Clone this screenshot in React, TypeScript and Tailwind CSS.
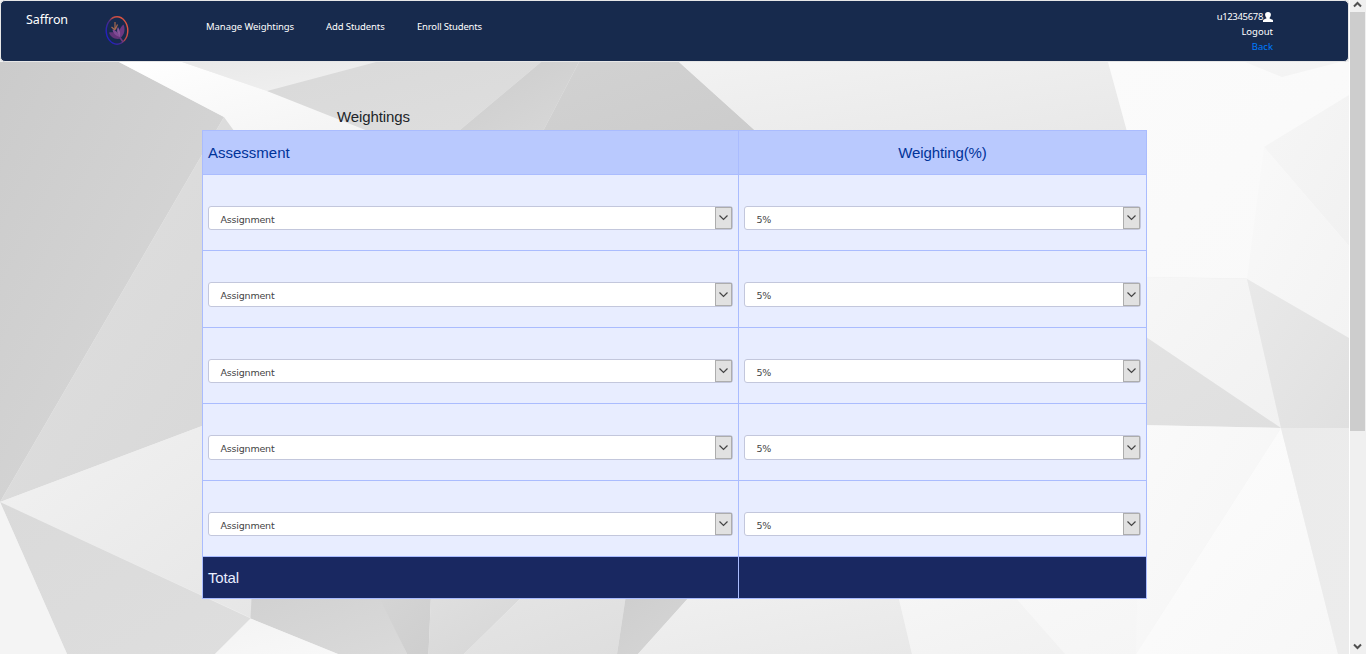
import React from "react";

type Facet = { points: string; from: string; to: string };

const facets: Facet[] = [
  { points: "0,62 119,62 224,117 0,502", from: "#cbcbcb", to: "#dadada" },
  { points: "224,117 0,502 202,426 260,400 260,130", from: "#e0e0e0", to: "#d7d7d7" },
  { points: "0,502 202,426 300,390 300,599 251,618", from: "#f3f3f3", to: "#e5e5e5" },
  { points: "0,502 251,618.5 215,654 67,654", from: "#dadada", to: "#dedede" },
  { points: "0,502 67,654 0,654", from: "#f4f4f4", to: "#f4f4f4" },
  { points: "119,62 182,62 267,91 385,135 237,135 224,117", from: "#ffffff", to: "#f3f3f3" },
  { points: "182,62 376,62 267,91", from: "#e9e9e9", to: "#f0f0f0" },
  { points: "376,62 541,62 454,135 378,135 267,91", from: "#d9d9d9", to: "#dedede" },
  { points: "541,62 579,62 541,135 454,135", from: "#cccccc", to: "#d8d8d8" },
  { points: "579,62 679,62 760,135 541,135", from: "#d2d2d2", to: "#cccccc" },
  { points: "679,62 1108,62 1128,135 760,135", from: "#f2f2f2", to: "#e8e8e8" },
  { points: "251.7,595 380,595 407,654 338,654 250.5,618.5", from: "#d1d1d1", to: "#dadada" },
  { points: "378,595 431,595 428.5,654 407,654", from: "#d5d5d5", to: "#cecece" },
  { points: "431,595 524,595 464,654 428.5,654", from: "#dfdfdf", to: "#d6d6d6" },
  { points: "524,595 626,595 617,654 464,654", from: "#e5e5e5", to: "#dedede" },
  { points: "626,595 691,595 638,654 617,654", from: "#cecece", to: "#d6d6d6" },
  { points: "691,595 898,595 912,654 638,654", from: "#f0f0f0", to: "#e8e8e8" },
  { points: "250.5,618.5 338,654 215,654", from: "#f3f3f3", to: "#f8f8f8" },
  { points: "898,595 1013,595 1065,654 912,654", from: "#f6f6f6", to: "#f1f1f1" },
  { points: "1013,595 1150,595 1150,632 1136,654 1065,654", from: "#f8f8f8", to: "#f5f5f5" },
  { points: "1108,62 1349,62 1349,280 1147,277 1128,135", from: "#fbfbfb", to: "#f9f9f9" },
  { points: "1245,62 1340,62 1282,77", from: "#f5f5f5", to: "#f3f3f3" },
  { points: "1264,147 1349,95 1349,246", from: "#f6f6f6", to: "#f1f1f1" },
  { points: "1264,147 1349,246 1349,338 1247,279", from: "#f9f9f9", to: "#f3f3f3" },
  { points: "1140,277 1247,279 1281,428 1140,333", from: "#f7f7f7", to: "#f1f1f1" },
  { points: "1247,279 1349,338 1349,428 1281,428", from: "#e9e9e9", to: "#e0e0e0" },
  { points: "1140,333 1281,428 1140,425", from: "#e3e3e3", to: "#dfdfdf" },
  { points: "1140,425 1281,428 1136,654", from: "#fafafa", to: "#f4f4f4" },
  { points: "1281,428 1338,654 1136,654", from: "#fdfdfd", to: "#f7f7f7" },
  { points: "1281,428 1349,428 1349,654 1338,654", from: "#ebebeb", to: "#ececec" },
];

function Backdrop() {
  return (
    <svg className="absolute left-0 top-0 -z-10" width="1349" height="654" viewBox="0 0 1349 654">
      <defs>
        {facets.map((f, i) => (
          <linearGradient key={i} id={`facet${i}`} x1="0" y1="0" x2="1" y2="1">
            <stop offset="0" stopColor={f.from} />
            <stop offset="1" stopColor={f.to} />
          </linearGradient>
        ))}
      </defs>
      <rect width="1349" height="654" fill="#f0f0f0" />
      {facets.map((f, i) => (
        <polygon key={i} points={f.points} fill={`url(#facet${i})`} />
      ))}
    </svg>
  );
}

function Logo() {
  return (
    <svg width="24" height="31" viewBox="0 0 24 31" className="block">
      <defs>
        <linearGradient id="ring" x1="0.15" y1="0.8" x2="0.85" y2="0.3">
          <stop offset="0" stopColor="#2420c0" />
          <stop offset="0.42" stopColor="#4a2a86" />
          <stop offset="0.62" stopColor="#b8484a" />
          <stop offset="1" stopColor="#dd5340" />
        </linearGradient>
      </defs>
      <ellipse cx="12" cy="15.5" rx="10.8" ry="13.7" fill="none" stroke="url(#ring)" strokeWidth="1.4" />
      <path d="M4 17.500C8 16.500 13 18 15.500 23.500C10.500 25 5.500 22.500 4 17.500Z" fill="#633479" />
      <path d="M18.500 9.500C20.500 14 19.500 19.500 15.500 23C13 18 14.500 12.500 18.500 9.500Z" fill="#6b3880" />
      <path d="M13 12C15.200 15 15.600 19 14.900 22.500C12.300 20 11.200 15 13 12Z" fill="#8a579c" />
      <path d="M7.500 14.500C10.500 15 13.500 18 14.800 22C11 21 8 18.500 7.500 14.500Z" fill="#7f4a94" />
      <path d="M15 22.500L18 27" stroke="#6b3880" strokeWidth="1.600" fill="none" />
      <path d="M10 15V7M10 15L6.500 12M10.500 14L12.500 9.500" stroke="#a5694f" strokeWidth="1.200" fill="none" />
    </svg>
  );
}

function UserIcon() {
  return (
    <svg width="10" height="10" viewBox="0 0 10 10" className="block">
      <path
        d="M5 0C7 0 8 1.200 7.900 2.800C7.800 4.300 7.200 5.200 6.600 5.800V6.600C7.600 7.100 9.800 7.400 10 8.400V10H0V8.400C.2 7.400 2.400 7.100 3.400 6.600V5.800C2.800 5.200 2.200 4.300 2.100 2.800C2 1.200 3 0 5 0Z"
        fill="#fff"
      />
    </svg>
  );
}

function NavBar() {
  return (
    <nav className="flex h-[62px] w-[1349px] rounded-[5px] border border-[#e7e7e7] bg-[#172a4d] font-['Noto_Sans',sans-serif] text-white">
      <div className="w-[104px] pl-[25px] pt-[9px] text-[12.5px] leading-[20px] tracking-[-0.1px]">Saffron</div>
      <div className="w-[101px] pt-[14px]">
        <Logo />
      </div>
      <div className="flex flex-1 gap-8 whitespace-nowrap pt-[18px] text-[9.5px] leading-[16px]">
        <a className="w-[88px] tracking-[-0.06px]">Manage Weightings</a>
        <a className="w-[59px] tracking-[-0.1px]">Add Students</a>
        <a className="tracking-[-0.18px]">Enroll Students</a>
      </div>
      <div className="flex flex-col items-end pr-[75px] pt-[8px] text-[9.5px] leading-[15px]">
        <div className="flex items-center">
          <span className="tracking-[-0.33px]">u12345678</span>
          <UserIcon />
        </div>
        <a>Logout</a>
        <a className="text-[#007bff]">Back</a>
      </div>
    </nav>
  );
}

function SelectBox({ value, tall }: { value: string; tall: boolean }) {
  return (
    <div
      className={`flex w-full rounded-[3px] border border-[#c3c7dc] bg-white ${tall ? "h-[25px]" : "h-[24px]"}`}
    >
      <div className="flex-1 overflow-hidden pl-[11.5px] pt-[5px] font-['DejaVu_Sans',sans-serif] text-[9.5px] leading-[16px] tracking-[-0.2px] text-[#444]">
        {value}
      </div>
      <div className="flex w-[17px] items-center justify-center border border-[#adadad] bg-[#e1e1e1] pr-px">
        <svg width="9" height="6" viewBox="0 0 9 6">
          <path d="M0.500 0.500L4.500 4.500L8.500 0.500" fill="none" stroke="#444" strokeWidth="1.200" />
        </svg>
      </div>
    </div>
  );
}

const rows = [
  { assessment: "Assignment", weight: "5%", tall: false },
  { assessment: "Assignment", weight: "5%", tall: true },
  { assessment: "Assignment", weight: "5%", tall: false },
  { assessment: "Assignment", weight: "5%", tall: true },
  { assessment: "Assignment", weight: "5%", tall: false },
];

function WeightTable() {
  return (
    <div className="w-[945px] border-l border-t border-[#aabcfe] text-[15px]">
      <div className="grid h-[44px] grid-cols-[536px_408px] bg-[#b9c9fe] leading-[43px] text-[#003399]">
        <div className="border-b border-r border-[#aabcfe] pl-[5px]">Assessment</div>
        <div className="border-b border-r border-[#aabcfe] text-center tracking-[-0.12px]">Weighting(%)</div>
      </div>
      {rows.map((row, i) => (
        <div
          key={i}
          className={`grid grid-cols-[536px_408px] bg-[#e8edff] ${row.tall ? "h-[77px]" : "h-[76px]"}`}
        >
          <div className="border-b border-r border-[#aabcfe] px-[5px] pt-[31px]">
            <SelectBox value={row.assessment} tall={row.tall} />
          </div>
          <div className="border-b border-r border-[#aabcfe] px-[5px] pt-[31px]">
            <SelectBox value={row.weight} tall={row.tall} />
          </div>
        </div>
      ))}
      <div className="grid h-[42px] grid-cols-[536px_408px] bg-[#192861] leading-[41px] text-[#e8edff]">
        <div className="border-b border-r border-[#aabcfe] pl-[5px] tracking-[-0.15px]">Total</div>
        <div className="border-b border-r border-[#aabcfe]" />
      </div>
    </div>
  );
}

function ScrollBar() {
  return (
    <div className="flex h-[654px] w-[17px] flex-col border-l border-white bg-[#f0f0f0]">
      <div className="flex h-[12px] justify-center pr-[2px] pt-[1px]">
        <svg width="9" height="7" viewBox="0 0 9 7">
          <path d="M1 5.500L4.500 2L8 5.500" fill="none" stroke="#505050" strokeWidth="2" />
        </svg>
      </div>
      <div className="h-[419px] w-[15px] bg-[#cdcdcd]" />
      <div className="flex flex-1 items-end justify-center pb-[4px] pr-[2px]">
        <svg width="9" height="7" viewBox="0 0 9 7">
          <path d="M1 1.500L4.500 5L8 1.500" fill="none" stroke="#505050" strokeWidth="2" />
        </svg>
      </div>
    </div>
  );
}

export default function App() {
  return (
    <div className="relative isolate flex h-[654px] w-[1366px] overflow-hidden font-['Liberation_Sans',Arial,sans-serif]">
      <Backdrop />
      <main className="w-[1349px]">
        <NavBar />
        <section className="pl-[202px] pt-[44px]">
          <h1 className="h-[24px] pl-[135px] text-[15px] leading-[22px] tracking-[-0.1px] text-[#212529]">Weightings</h1>
          <WeightTable />
        </section>
      </main>
      <ScrollBar />
    </div>
  );
}
